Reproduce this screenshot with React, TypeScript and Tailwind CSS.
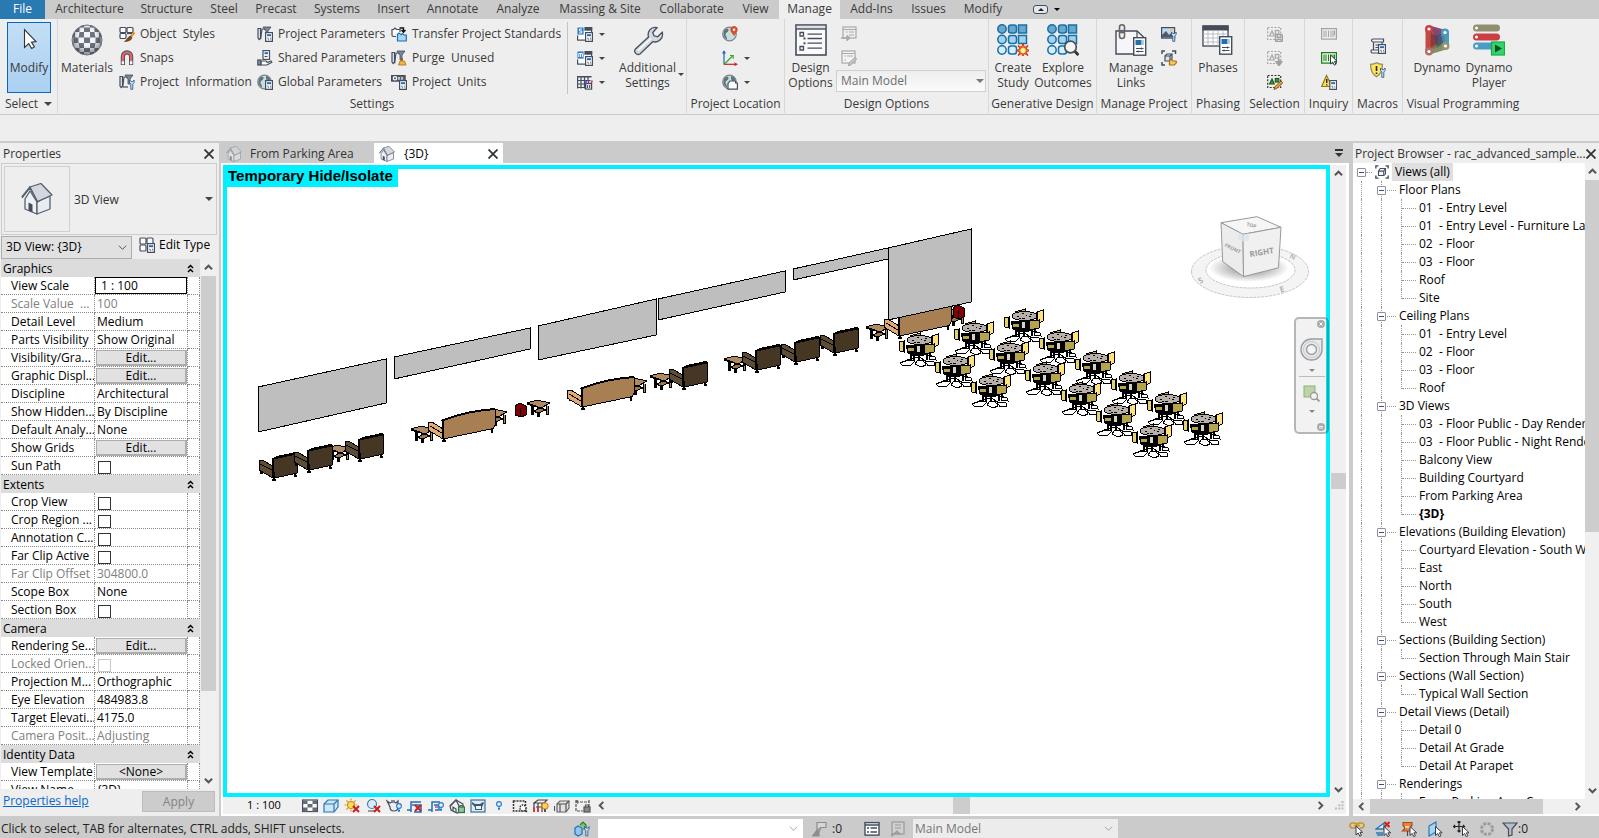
import type { ReactNode } from "react";

/* ---------- icon primitives ---------- */

const D = "#454d5c";

function Ico({ s = 16, v = 16, children }: { s?: number; v?: number; children: ReactNode }) {
  return (
    <svg width={s} height={s} viewBox={`0 0 ${v} ${v}`} fill="none" stroke={D} strokeWidth={1.2} className="shrink-0" aria-hidden="true">
      {children}
    </svg>
  );
}

const Calc = ({ x = 8, y = 6 }: { x?: number; y?: number }) => (
  <g transform={`translate(${x} ${y})`}>
    <rect x="0.6" y="0.6" width="6.8" height="8.8" fill="#fff" />
    <rect x="2" y="2.2" width="4" height="2" fill="#1f6fb5" stroke="none" />
    <path d="M2.2 6.3h1.4M2.9 7.8h1.2M5 6.3h1M5.4 7.8h.8" strokeWidth="0.9" />
  </g>
);

const Wrench = ({ x = 9, y = 5 }: { x?: number; y?: number }) => (
  <g transform={`translate(${x} ${y})`}>
    <path d="M1 1v2.5L2.3 5v5.3h2V5l1.3-1.5V1L4.3 2.6H2.4z" fill="#dbe9f6" strokeWidth="0.9" stroke="#2f5d8c" />
  </g>
);

const RedX = ({ x = 8, y = 8 }: { x?: number; y?: number }) => (
  <path d={`M${x} ${y}l6 6M${x + 6} ${y}l-6 6`} stroke="#c81e1e" strokeWidth="2" />
);

const Bulb = ({ x = 12, y = 8 }: { x?: number; y?: number }) => (
  <g>
    <circle cx={x} cy={y} r="2.4" fill="#dff0ff" stroke="#2878c8" strokeWidth="1.1" />
    <path d={`M${x - 1} ${y + 3.4}h2v2.4h-2z`} fill="#2878c8" stroke="none" />
  </g>
);

const Pointer = ({ x = 8, y = 5 }: { x?: number; y?: number }) => (
  <path d={`M${x} ${y}v9l2.2-2 1.6 3.2 1.6-.9-1.5-3h2.8z`} fill="#fff" strokeWidth="1" stroke="#333b48" />
);

const Blueprint = () => (
  <>
    <path d="M1 2.5h2.5V12l-1.4 1.6L1 12z" fill="#e6edf5" />
    <path d="M3.6 13.4L5 3h2l1.5 1" />
  </>
);

const Funnel = ({ x = 7 }: { x?: number }) => <path d={`M${x} 1h8l-3 4v5h-2V5z`} fill="#7c8694" strokeWidth="0.8" />;

const ObjectStyles = () => (
  <Ico>
    <rect x="1" y="1.5" width="6" height="5" rx="1" fill="#fafafa" />
    <rect x="8" y="1.5" width="6" height="5" rx="1" fill="#fafafa" />
    <rect x="1" y="7.5" width="6" height="5" rx="1" fill="#fafafa" />
    <path d="M8 7.5h5" />
    <path d="M15.5 6.5l-4.5 5" stroke="#e88a1c" strokeWidth="2" />
    <path d="M11.6 10l1.2 1.5c.4 2-2.6 4-7.3 4 2.400-1 3-4.600 6.100-5.500z" fill="#7a4a22" stroke="#5c3416" strokeWidth="0.6" />
  </Ico>
);
const Snaps = () => (
  <Ico>
    <path d="M3.900 15V6.500a4.100 4.100 0 0 1 8.200 0V15" stroke={D} strokeWidth="4.200" />
    <path d="M3.900 14.200V6.500a4.100 4.100 0 0 1 8.200 0v7.700" stroke="#e2666a" strokeWidth="2.400" />
    <path d="M3.900 14.300v-3M12.100 14.300v-3" stroke="#fff" strokeWidth="2.400" />
  </Ico>
);
const ProjectInfo = () => (<Ico><Blueprint /><Funnel x={6} /><path d="M4 13h5" /><Wrench x={9.5} y={5} /></Ico>);
const ProjectParams = () => (<Ico><Blueprint /><Funnel x={6} /><Calc /></Ico>);
const SharedParams = () => (
  <Ico>
    <rect x="6" y="0.600" width="6.500" height="8.800" fill="#fff" />
    <rect x="7.500" y="2.200" width="3.500" height="2" fill="#1f6fb5" stroke="none" />
    <path d="M7.500 6.500h3" />
    <path d="M4 11h5l1.500 1.500 3.500-1.500.8 1.200-4.800 2.800H4z" fill="#fff" />
    <rect x="0.800" y="10" width="3" height="5" fill="#8b95a3" />
  </Ico>
);
const Globe = ({ children }: { children?: ReactNode }) => (
  <Ico>
    <circle cx="7.500" cy="8" r="6.800" fill="#c9dcdc" stroke="#7c8694" />
    <path d="M3 3.500c2-1.500 4-1 3.500 1s-3 2-3 4 2 2.500 1.500 5c-2-1-3.600-3-3.600-5.500S2.200 4.600 3 3.500zM9 2c2 .3 4 2 4.600 4L11 7.500 9 5z" fill="#5f7379" stroke="none" />
    {children}
  </Ico>
);
const Transfer = () => (
  <Ico>
    <path d="M1 9V3.500h1.500L4 2l1.500 1.500H9V6" fill="#fff" />
    <path d="M1 9c0 1 .5 1.500 1.500 1.500H5" />
    <path d="M8.500 2h4v3M10.500 4l2 2.200 2-2.200" stroke="#111" strokeWidth="1.400" />
    <path d="M6.500 8.500L8 7l2 1.800 1.500-1.300L13 9h2.300v6H6.500z" fill="#a9d4f2" stroke="#1f6fb5" />
  </Ico>
);
const Purge = () => (
  <Ico>
    <Blueprint /><Funnel x={6} />
    <path d="M11 8v3" stroke="#8a5a10" strokeWidth="1.500" />
    <path d="M9 11h4.500l1.500 4H7.500z" fill="#f0b93a" stroke="#b07818" strokeWidth="0.900" />
  </Ico>
);
const Units = () => (
  <Ico>
    <rect x="0.600" y="1.600" width="13.500" height="5.500" fill="#59616e" />
    <circle cx="4" cy="4.300" r="1.700" stroke="#fff" /><path d="M8 5.800V3M11 5.800V3" stroke="#fff" />
    <Calc />
  </Ico>
);
const Sched = ({ t }: { t: ReactNode }) => (
  <Ico>
    <rect x="0.600" y="1.600" width="14" height="12.500" fill="#fff" />
    <rect x="0.600" y="1.600" width="14" height="2.500" fill={D} />
    <rect x="0" y="1" width="7" height="8" fill="#2f7cc4" stroke="#fff" strokeWidth="0.800" />
    {t}
    <Calc y={6} />
  </Ico>
);
const SchedS = () => <Sched t={<path d="M5 3H2.500v2h2.200v2H2" stroke="#fff" strokeWidth="1" />} />;
const SchedM = () => <Sched t={<path d="M1.800 7V3.500h3.600V7M3.600 3.500V7" stroke="#fff" strokeWidth="1" />} />;
const PenTable = () => (
  <Ico>
    <path d="M0.600 2.500h13.500M0.600 2.500v12M0.600 6.500h13M0.600 10h7M0.600 13.500h7M4 2.500v12M7.500 2.500v12M11 2.500v4" />
    <path d="M0 2h14.500v1.500H0z" fill={D} stroke="none" />
    <path d="M9 10V7M11.500 10V6" stroke="#5c3fc0" strokeWidth="1.600" /><path d="M14 10l1.200-3.500" stroke="#d33" strokeWidth="1.600" />
    <rect x="8.600" y="9.600" width="6" height="5.500" fill="#fff" /><path d="M10.500 11v3M12.700 11v3" />
  </Ico>
);
const Pin = () => (<Globe><path d="M12 9.500L9 5a3.300 3.300 0 1 1 6 0z" fill="#e0502a" stroke="#b83a1a" strokeWidth="0.600" /><circle cx="12" cy="3.800" r="1.200" fill="#fff" stroke="none" /></Globe>);
const Axes = () => (
  <Ico>
    <path d="M2 1v13.500" stroke="#1d62b0" /><path d="M.5 3.500L2 .8l1.500 2.700" stroke="#1d62b0" fill="#1d62b0" strokeWidth="0.600" />
    <path d="M2 14.300h12" stroke="#d02020" /><path d="M12.500 12.800l3 1.500-3 1.500" stroke="#d02020" fill="#d02020" strokeWidth="0.600" />
    <path d="M2.500 14L10.500 6" stroke="#35a82c" /><path d="M8 5.500h3.200v3.200" stroke="#35a82c" />
  </Ico>
);
const Coord = () => (<Globe><path d="M6 15.200V9.500L8 7h5.500v2h1.900v6.200z" fill="#fff" /></Globe>);

const DoAdd = () => (<Ico><g stroke="#a9a9a9"><rect x="2" y="1" width="13" height="11" /><path d="M2 3.500h13M8 6h5M8 9h5M5 6h1.500" /><path d="M0 12h8M5.500 9.500L8.500 12l-3 2.500" strokeWidth="1.700" /></g></Ico>);
const DoEdit = () => (<Ico><g stroke="#a9a9a9"><rect x="1" y="1" width="13" height="12" fill="#f4f4f4" /><path d="M1 3.500h13M6 6h6M3.500 6H5M3.500 10H5" /><path d="M8 13.500l6-6 1.500 1.500-6 6-2 .5z" fill="#ddd" /></g></Ico>);

const ManageImages = () => (
  <Ico>
    <rect x="0.600" y="1.600" width="13" height="10.500" fill="#bcd9ee" />
    <path d="M1 11.500V9l4-4 3 4 2-2 3 3v1.500z" fill="#4f5967" stroke="none" /><circle cx="10.500" cy="4.500" r="1.300" fill="#ffc04d" stroke="none" />
    <Wrench x={9.500} y={5} />
  </Ico>
);
const Decal = () => (
  <Ico>
    <path d="M1 4V1h3M11 1h3.500v3M1 12v3h3" strokeWidth="1.500" />
    <path d="M4 6l2-2h5v5l-2 2H4z" fill="#dfe5ec" /><path d="M4 6h5v5M9 6l2-2" />
    <path d="M8.500 10h2.500l1 1h3l.5 1.500-2 2.500h-5z" fill="#f6c95a" stroke="#a5701a" />
  </Ico>
);
const SelBase = ({ c }: { c: string }) => (
  <>
    <rect x="0.700" y="1.500" width="13" height="12" stroke={c} strokeDasharray="2 1.400" />
    <path d="M2.500 10l2.500-5 2.200 5z" stroke={c} /><rect x="8.300" y="4.500" width="3.500" height="3.500" stroke={c} />
  </>
);
const SelSave = () => (<Ico><SelBase c="#a6a6a6" /><rect x="8.500" y="8.500" width="7" height="7" rx="0.800" fill="#ddd" stroke="#a0a0a0" /><path d="M10.300 8.800v2.500h3.400V8.800M10 15.300v-2h4v2" stroke="#a0a0a0" /></Ico>);
const SelLoad = () => (<Ico><SelBase c="#a6a6a6" /><path d="M11.800 8.500v4M9.500 12h4.800L12 15.500z" stroke="#a0a0a0" strokeWidth="1.800" fill="#a0a0a0" /></Ico>);
const SelEdit = () => (
  <Ico>
    <rect x="0.700" y="1.500" width="13" height="12" stroke="#333" strokeDasharray="2 1.400" />
    <path d="M2.500 10l2.500-5 2.200 5z" fill="#3c9a3c" stroke="#1c5c1c" /><rect x="8.300" y="4.500" width="3.500" height="3.500" fill="#3c9a3c" stroke="#1c5c1c" />
    <path d="M7 15.500l1-3 6-5.500 1.800 1.800-6 5.600z" fill="#eda13a" stroke="#8a4a12" strokeWidth="0.900" />
  </Ico>
);
const Bars = ({ c, f }: { c: string; f: string }) => (<><rect x="0.600" y="2.600" width="14.800" height="10.500" fill={f} stroke={c} /><path d="M3 4.500v6.500M5 4.500v6.500M7.500 4.500v6.500M10 4.500v6.500M12 4.500v6.500M13.500 4.500v5" stroke={c} strokeWidth="1" /></>);
const Ids = () => <Ico><Bars c="#a2a2a2" f="#eee" /></Ico>;
const SelId = () => (<Ico><Bars c="#1a7a1a" f="#e6f5e0" /><Pointer x={9.500} y={5} /></Ico>);
const Warn = () => (<Ico><path d="M5.500 1.500l5.500 11H0.700z" fill="#ffe14a" stroke="#8d7a20" /><path d="M5.700 5v4M5.700 10.300v1.200" stroke="#222" strokeWidth="1.400" /><Calc x={8.200} y={6} /></Ico>);
const MacroMgr = () => (<Ico><path d="M3 1h10.500v3H3.500C1 4 1 1 3 1zM3.500 4v8M12 4v2M1.500 12H9v3H2.500C1 15 .5 13 1.500 12zM5.500 7H9M5.500 9.500H8" fill="#f4f4f4" /><Calc y={6} /></Ico>);
const MacroSec = () => (<Ico><path d="M6.500.8C8.500 2 10.500 2.300 12.500 2.300c0 6-1.500 10-6 12.500C2 12.300.6 8.300.6 2.300 2.600 2.300 4.500 2 6.500.8z" fill="#ffe45c" stroke="#8d8a60" /><path d="M6.500 4v5M6.500 10.500V12" stroke="#222" strokeWidth="1.600" /><Wrench x={9.500} y={5} /></Ico>);

/* large ribbon icons on a 32 unit grid */
const Big = ({ children }: { children: ReactNode }) => <Ico s={32} v={32}>{children}</Ico>;
const ModifyIcon = () => (<Big><path d="M11.500 5.500v18l4.200-3.800 3 4.800 2.700-1.600-2.900-4.800 4.500-.6z" fill="#fff" stroke="#333" strokeWidth="1.100" /></Big>);
const Materials = () => (
  <Big>
    <defs>
      <radialGradient id="ball" cx="0.500" cy="0.400" r="0.600"><stop offset="0.500" stopColor="#000" stopOpacity="0" /><stop offset="1" stopColor="#20262f" stopOpacity="0.500" /></radialGradient>
      <clipPath id="ballclip"><circle cx="16" cy="16" r="15" /></clipPath>
    </defs>
    <circle cx="16" cy="16" r="15" fill="#f2f4f6" stroke="none" />
    <g clipPath="url(#ballclip)" fill="#6b7480" stroke="none">
      <path d="M8 0h5v3.500H8zM19 0h5v3.500h-5z" />
      <path d="M4 3.500h4.500V8H4zM13 3.500h6V8h-6zM23.500 3.500H28V8h-4.500z" />
      <path d="M0 8h4v5.500H0zM8.500 8H13v5.500H7.500zM19 8h4.500l1 5.500H19zM28 8h4v5.500h-4z" />
      <path d="M2.500 13.500h5V19h-5zM13 13.500h6V19h-6zM24.500 13.500h5V19h-5z" />
      <path d="M0 19h2.500v5H0zM7.500 19H13v5H8.500zM19 19h5.500l-1 5H19zM29.500 19H32v5h-2.500z" />
      <path d="M4 24h4.500v4H5zM13 24h6v4h-6zM23.500 24H28l-1 4h-3.500z" />
      <path d="M8.500 28H13v4H9zM19 28h4.500v4H19z" />
    </g>
    <circle cx="16" cy="16" r="15" fill="url(#ball)" stroke="#6a727e" strokeWidth="1" />
  </Big>
);
const Additional = () => (
  <Big>
    <path d="M3.200 25.200L16.500 13c-1.500-5 2-10 7.500-9.500l1 .3-4.300 4.700 1.300 3.300 3.600 1 4.700-4.500c1.500 6-4 11-9.300 9.300L8 30c-3.200 1.700-6.500-1.800-4.800-4.800z" fill="#d5dae0" strokeWidth="1.300" />
    <path d="M6 26.500L19 14.500" stroke="#fff" strokeWidth="1.600" />
  </Big>
);
const DesignOpts = () => (
  <Big>
    <rect x="1" y="1" width="30" height="30" fill="#fbfbfc" strokeWidth="1.600" />
    <path d="M1.800 1.800h28.400V5H1.800z" fill="#dde1e6" stroke="none" /><path d="M1 5h30" strokeWidth="1.400" />
    <path d="M5 8.500h3.500V12H5zM5 22.500h3.500V26H5z" strokeWidth="1.300" />
    <path d="M12.500 10.200h14.500M12.500 19.200h14.500M12.500 24.200h14.500M12.500 14.500h14.500" strokeWidth="1.300" />
    <path d="M8.500 13.500h2v2h-2zM8.500 18.200h2v2h-2z" fill={D} stroke="none" />
  </Big>
);
const Dots = () => (
  <g stroke="#1a6fa8" strokeWidth="1.500">
    <g fill="#6aa8cc"><circle cx="5" cy="5" r="4.200" /><rect x="11.500" y="1" width="8" height="8" rx="2.500" /><rect x="21.500" y="1" width="8" height="8" /></g>
    <g fill="#a3d4ec"><circle cx="5" cy="15.500" r="4.200" /><rect x="11.500" y="11.500" width="8" height="8" rx="2.500" /><rect x="21.500" y="11.500" width="8" height="8" /></g>
    <g fill="#d3f0fc"><circle cx="5" cy="26" r="4.200" /><rect x="11.500" y="22" width="8" height="8" rx="2.500" /></g>
  </g>
);
const CreateStudy = () => (
  <Big><Dots /><path d="M26 19.500l1.500 4 3.500-2-2 3.500 3.500 1.500-3.500 1.500 2 3.500-3.500-2-1.500 2.500-1.500-2.500-3.500 2 2-3.500-3.500-1.500 3.500-1.500-2-3.500 3.500 2z" fill="#f08a1c" stroke="#d0301a" strokeWidth="1" /><circle cx="26" cy="26.500" r="2.500" fill="#fff2a0" stroke="none" /></Big>
);
const Explore = () => (
  <Big><Dots /><path d="M27.500 27l4 4" stroke="#333" strokeWidth="3" /><circle cx="23.500" cy="23" r="5.800" fill="#f1f5f5" stroke="#4a4f58" strokeWidth="1.700" /></Big>
);
const BigDoc = ({ x, y }: { x: number; y: number }) => (
  <g transform={`translate(${x} ${y})`}>
    <rect x="0.700" y="0.700" width="12" height="17.500" fill="#fff" strokeWidth="1.400" />
    <rect x="2.500" y="3" width="6" height="5" fill="#1f6fb5" stroke="none" /><path d="M10 3v5" stroke="#8aa" />
    <path d="M3 11.500h7.500M3 14.500h7.500M8.500 10.500v2M5 13.500v2" strokeWidth="1" />
  </g>
);
const ManageLinks = () => (
  <Big>
    <path d="M1 7h21l7 6.500V30H1z" fill="#f6f6f8" strokeWidth="1.400" /><path d="M22 7v6.500h7" />
    <rect x="4.500" y="0.800" width="5" height="8" rx="2.500" stroke="#666" strokeWidth="1.600" /><rect x="4.500" y="6.500" width="5" height="8" rx="2.500" stroke="#666" strokeWidth="1.600" />
    <BigDoc x={18} y={13} />
  </Big>
);
const PhasesIcon = () => (
  <Big>
    <rect x="1" y="2" width="25" height="20" fill="#fff" strokeWidth="1.400" /><path d="M1 2h25v4H1z" fill={D} />
    <path d="M1 10h25M1 14h25M1 18h25M6 6v16M11 6v16M16 6v16M21 6v16" stroke="#b0b6be" strokeWidth="0.900" />
    <BigDoc x={17} y={12} />
  </Big>
);
const DynamoIcon = () => (
  <Big>
    <g stroke="none">
      <path d="M5 4l12 8v9L6 28z" fill="#b5433f" /><path d="M6 3l21 5-11 5z" fill="#7a4a78" /><path d="M27 8v14L17 21l-1-8z" fill="#4a86a8" />
      <path d="M6 29l10-9 11 2-6 4z" fill="#5e8a58" /><path d="M10 9l7 4-1 7-8 3z" fill="#8c3a3a" /><path d="M13 12l7-2 2 9-6 4z" fill="#4a4560" opacity="0.700" />
    </g>
    <path d="M7 4v24" stroke="#c24a45" strokeWidth="5" /><path d="M8 3l18 5" stroke="#8a4a70" strokeWidth="3" /><path d="M26 9v13" stroke="#4a9ab8" strokeWidth="4" /><path d="M8 28.500l18-5.500" stroke="#8a8a68" strokeWidth="4" />
    <g strokeWidth="0" fill="#fff"><circle cx="8" cy="5" r="4" fill="#cc3f45" /><circle cx="24" cy="8.500" r="4" fill="#4a9ac0" /><circle cx="8" cy="27.500" r="4" fill="#b0706a" /><circle cx="24.500" cy="22" r="4" fill="#9a946c" /><circle cx="8" cy="5" r="1.600" /><circle cx="24" cy="8.500" r="1.600" /><circle cx="8" cy="27.500" r="1.600" /><circle cx="24.500" cy="22" r="1.600" /></g>
  </Big>
);
const PlayerIcon = () => (
  <Big>
    <g stroke="none">
      <rect x="0" y="0.500" width="27" height="7" rx="3.500" fill="#918d70" /><rect x="0" y="9.500" width="27" height="7" rx="3.500" fill="#ca3f45" /><rect x="0" y="18.500" width="24" height="7" rx="3.500" fill="#4a9cc4" />
      <g fill="#fff"><circle cx="3.500" cy="4" r="1.500" /><circle cx="3.500" cy="13" r="1.500" /><circle cx="3.500" cy="22" r="1.500" /></g>
    </g>
    <rect x="18.500" y="18" width="13" height="13" fill="#2fd66a" stroke="#1ba84c" /><path d="M22 20.500l7 4-7 4z" fill="#0d4a20" stroke="none" />
  </Big>
);

const House = ({ s = 16, faded = false }: { s?: number; faded?: boolean }) => (
  <svg width={s} height={s} viewBox="0 0 32 32" className={faded ? "shrink-0 opacity-50" : "shrink-0"} strokeLinejoin="round" aria-hidden="true">
    <path d="M4 16L9 8l7 11v12L4 26z" fill="#eef1f4" stroke="#566070" strokeWidth="1.300" />
    <path d="M16 19v12l13-5V13z" fill="#e9ecf0" stroke="#566070" strokeWidth="1.300" />
    <path d="M1.500 14.500L9 5l7.500 14 1.500-1L9 3.500 1 13.500z" fill="#9aa3af" stroke="#566070" strokeWidth="1.200" />
    <path d="M9 4l11-3.500L31 12l-14.500 6.500z" fill="#d3d8df" stroke="#566070" strokeWidth="1.300" />
    <path d="M7.500 19.500l4 2v8l-4-2z" fill="#454d5c" />
  </svg>
);

const Arrow = ({ c = "border-t-[#444]" }: { c?: string }) => (
  <span className={`h-0 w-0 shrink-0 border-x-[3px] border-t-[3px] border-x-transparent ${c}`} />
);

const Chev = ({ d, s = 9 }: { d: "up" | "down" | "left" | "right"; s?: number }) => {
  const p = { up: "M1 7l4-4 4 4", down: "M1 3l4 4 4-4", left: "M7 1L3 5l4 4", right: "M3 1l4 4-4 4" }[d];
  return <svg width={s} height={s} viewBox="0 0 10 10" fill="none" stroke="#555" strokeWidth="2.200" className="shrink-0" aria-hidden="true"><path d={p} /></svg>;
};

/* ---------- ribbon ---------- */

const TABS: [string, string][] = [
  ["Architecture", "w-[85px]"], ["Structure", "w-[69px]"], ["Steel", "w-[46px]"], ["Precast", "w-[58px]"], ["Systems", "w-[64px]"],
  ["Insert", "w-[49px]"], ["Annotate", "w-[69px]"], ["Analyze", "w-[62px]"], ["Massing & Site", "w-[102px]"], ["Collaborate", "w-[81px]"],
  ["View", "w-[47px]"], ["Manage", "w-[61px]"], ["Add-Ins", "w-[63px]"], ["Issues", "w-[51px]"], ["Modify", "w-[58px]"],
];

function Tabs() {
  return (
    <nav className="flex h-[19px] shrink-0 items-stretch bg-[#cbcbcb]" aria-label="Ribbon tabs">
      <button className="mr-0.5 w-[45px] bg-[#2a7ab2] pb-0.5 text-white">File</button>
      {TABS.map(([t, w]) => (
        <button key={t} className={`${w} whitespace-nowrap pb-0.5 text-center ${t === "Manage" ? "bg-[#eeeeee]" : ""}`}>{t}</button>
      ))}
      <button className="ml-[21px] flex items-center gap-[6px]" aria-label="Ribbon display">
        <span className="flex h-[9px] w-[15px] items-center justify-center rounded-[3px] border border-[#444c5c] bg-[#e4e8ee]">
          <span className="h-0 w-0 border-x-[3px] border-b-[3px] border-x-transparent border-b-[#222]" />
        </span>
        <Arrow c="border-t-black" />
      </button>
    </nav>
  );
}

function Group({ label, w, last, children }: { label: ReactNode; w: string; last?: boolean; children: ReactNode }) {
  return (
    <section className={`${w} flex shrink-0 flex-col pt-[3px] ${last ? "" : "border-r border-[#d8d8d8]"}`}>
      <div className="flex h-[72px]">{children}</div>
      <h2 className="flex h-5 items-center justify-center gap-[6px] whitespace-nowrap pt-px">{label}</h2>
    </section>
  );
}

function BigBtn({ icon, label, w, arrow, active }: { icon: ReactNode; label: string[]; w: string; arrow?: boolean; active?: boolean }) {
  return (
    <button className={`${w} flex shrink-0 flex-col items-center ${active ? "border border-[#0a66bf] bg-gradient-to-b from-[#c3def6] to-[#abd0f1] pt-px" : "pt-[2px]"}`}>
      {icon}
      <span className="relative mt-1 leading-[15px]">
        {label.map((l) => <span key={l} className="block whitespace-nowrap">{l}</span>)}
        {arrow && <span className="absolute left-full top-[13px] ml-0.5 flex"><Arrow /></span>}
      </span>
    </button>
  );
}

const Cmd = ({ icon, label, arrow, name }: { icon: ReactNode; label?: string; arrow?: boolean; name?: string }) => (
  <button className="flex h-6 items-center whitespace-pre" aria-label={name ?? label}>
    {icon}
    {label && <span className="ml-[5px]">{label}</span>}
    {arrow && <span className="ml-[6px] flex"><Arrow /></span>}
  </button>
);

const Col = ({ w, pad = "", children }: { w: string; pad?: string; children: ReactNode }) => <div className={`${w} ${pad} flex shrink-0 flex-col`}>{children}</div>;

function Ribbon() {
  return (
    <div className="flex h-24 shrink-0 border-b border-[#c9c9c9] bg-[#eeeeee] pb-px">
      <Group w="w-[58px]" label={<>Select <span className="h-0 w-0 border-x-4 border-t-4 border-x-transparent border-t-[#444]" /></>}>
        <div className="flex pl-[7px]"><BigBtn active w="w-[44px]" icon={<ModifyIcon />} label={["Modify"]} /></div>
      </Group>
      <Group w="w-[629px]" label="Settings">
        <BigBtn w="w-[58px]" icon={<Materials />} label={["Materials"]} />
        <Col w="w-[138px]" pad="pl-[3px]">
          <Cmd icon={<ObjectStyles />} label="Object  Styles" />
          <Cmd icon={<Snaps />} label="Snaps" />
          <Cmd icon={<ProjectInfo />} label="Project  Information" />
        </Col>
        <Col w="w-[134px]" pad="pl-[3px]">
          <Cmd icon={<ProjectParams />} label="Project Parameters" />
          <Cmd icon={<SharedParams />} label="Shared Parameters" />
          <Cmd icon={<Globe><Calc /></Globe>} label="Global Parameters" />
        </Col>
        <Col w="w-[179px]" pad="pl-[3px]">
          <Cmd icon={<Transfer />} label="Transfer Project Standards" />
          <Cmd icon={<Purge />} label="Purge  Unused" />
          <Cmd icon={<Units />} label="Project  Units" />
        </Col>
        <Col w="w-[48px]" pad="border-l border-[#c4c4c4] pl-[9px]">
          <Cmd icon={<SchedS />} name="Structural settings" arrow />
          <Cmd icon={<SchedM />} name="MEP settings" arrow />
          <Cmd icon={<PenTable />} name="Panel schedule templates" arrow />
        </Col>
        <BigBtn w="w-[65px]" icon={<Additional />} label={["Additional", "Settings"]} arrow />
      </Group>
      <Group w="w-[98px]" label="Project Location">
        <Col w="w-[98px]" pad="pl-[35px]">
          <Cmd icon={<Pin />} name="Location" />
          <Cmd icon={<Axes />} name="Coordinates" arrow />
          <Cmd icon={<Coord />} name="Position" arrow />
        </Col>
      </Group>
      <Group w="w-[204px]" label="Design Options">
        <BigBtn w="w-[51px]" icon={<DesignOpts />} label={["Design", "Options"]} />
        <div className="flex flex-col">
          <span className="flex flex-col pl-[5px]"><Cmd icon={<DoAdd />} name="Add to set" /><Cmd icon={<DoEdit />} name="Pick to edit" /></span>
          <span className="flex items-center">
            <select aria-label="Active option" disabled className="h-[22px] w-[150px] appearance-none border border-[#d0d0d0] bg-gradient-to-b from-[#eeeeee] to-[#fbfbfb] pl-1 text-[#6d6d6d] opacity-100">
              <option>Main Model</option>
            </select>
            <span className="-ml-[10px] h-0 w-0 border-x-4 border-t-4 border-x-transparent border-t-[#777]" />
          </span>
        </div>
      </Group>
      <Group w="w-[108px]" label="Generative Design">
        <BigBtn w="w-[48px]" icon={<CreateStudy />} label={["Create", "Study"]} />
        <BigBtn w="w-[52px]" icon={<Explore />} label={["Explore", "Outcomes"]} />
      </Group>
      <Group w="w-[95px]" label="Manage Project">
        <span className="w-1 shrink-0" />
        <BigBtn w="w-[60px]" icon={<ManageLinks />} label={["Manage", "Links"]} />
        <Col w="w-4"><Cmd icon={<ManageImages />} name="Manage images" /><Cmd icon={<Decal />} name="Decal types" /></Col>
      </Group>
      <Group w="w-[53px]" label="Phasing"><BigBtn w="w-[52px]" icon={<PhasesIcon />} label={["Phases"]} /></Group>
      <Group w="w-[60px]" label="Selection">
        <Col w="w-[60px]" pad="items-center"><Cmd icon={<SelSave />} name="Save selection" /><Cmd icon={<SelLoad />} name="Load selection" /><Cmd icon={<SelEdit />} name="Edit selection" /></Col>
      </Group>
      <Group w="w-12" label="Inquiry">
        <Col w="w-12" pad="items-center"><Cmd icon={<Ids />} name="IDs of selection" /><Cmd icon={<SelId />} name="Select by ID" /><Cmd icon={<Warn />} name="Warnings" /></Col>
      </Group>
      <Group w="w-[50px]" label="Macros">
        <Col w="w-[50px]" pad="items-center justify-center"><Cmd icon={<MacroMgr />} name="Macro manager" /><Cmd icon={<MacroSec />} name="Macro security" /></Col>
      </Group>
      <Group w="w-[120px]" label="Visual Programming" last>
        <span className="w-2" />
        <BigBtn w="w-[52px]" icon={<DynamoIcon />} label={["Dynamo"]} />
        <BigBtn w="w-[52px]" icon={<PlayerIcon />} label={["Dynamo", "Player"]} />
      </Group>
    </div>
  );
}

/* ---------- properties palette ---------- */

type Prop = { n: string; v?: string; k?: "edit" | "check" | "box"; off?: boolean };
const SECTIONS: { title: string; rows: Prop[] }[] = [
  { title: "Graphics", rows: [
    { n: "View Scale", v: "1 : 100", k: "box" }, { n: "Scale Value  ...", v: "100", off: true }, { n: "Detail Level", v: "Medium" }, { n: "Parts Visibility", v: "Show Original" },
    { n: "Visibility/Gra...", v: "Edit...", k: "edit" }, { n: "Graphic Displ...", v: "Edit...", k: "edit" }, { n: "Discipline", v: "Architectural" }, { n: "Show Hidden...", v: "By Discipline" },
    { n: "Default Analy...", v: "None" }, { n: "Show Grids", v: "Edit...", k: "edit" }, { n: "Sun Path", k: "check" } ] },
  { title: "Extents", rows: [
    { n: "Crop View", k: "check" }, { n: "Crop Region ...", k: "check" }, { n: "Annotation C...", k: "check" }, { n: "Far Clip Active", k: "check" },
    { n: "Far Clip Offset", v: "304800.0", off: true }, { n: "Scope Box", v: "None" }, { n: "Section Box", k: "check" } ] },
  { title: "Camera", rows: [
    { n: "Rendering Se...", v: "Edit...", k: "edit" }, { n: "Locked Orien...", k: "check", off: true }, { n: "Projection M...", v: "Orthographic" },
    { n: "Eye Elevation", v: "484983.8" }, { n: "Target Elevati...", v: "4175.0" }, { n: "Camera Posit...", v: "Adjusting", off: true } ] },
  { title: "Identity Data", rows: [{ n: "View Template", v: "<None>", k: "edit" }, { n: "View Name", v: "{3D}" }] },
];

function Value({ p }: { p: Prop }) {
  if (p.k === "edit") return <button aria-label={`${p.n} ${p.v}`} className="ml-px mt-px block h-4 w-[91px] border-b-2 border-l border-r-2 border-t border-[#adadad] bg-[#e1e1e1] text-center leading-[13px]">{p.v}</button>;
  if (p.k === "check") return <input type="checkbox" aria-label={p.n} disabled={p.off} className={`ml-[3px] mt-[3px] block h-[13px] w-[13px] appearance-none border bg-white ${p.off ? "border-[#c8c8c8]" : "border-[#333]"}`} />;
  if (p.k === "box") return <input aria-label={p.n} defaultValue={p.v} className="block h-[17px] w-[92px] border border-black bg-white pl-[5px]" />;
  return <span className={p.off ? "pl-[2px] text-[#808080]" : "pl-[2px]"}>{p.v}</span>;
}

const CloseBtn = () => (
  <button aria-label="Close" className="flex"><svg width="10" height="10" viewBox="0 0 10 10" stroke="#333" strokeWidth="1.800" aria-hidden="true"><path d="M.5.5l9 9M9.500.5l-9 9" /></svg></button>
);

function VScroll({ cls, thumb }: { cls: string; thumb: string }) {
  return (
    <div className={`${cls} flex shrink-0 flex-col items-center bg-[#f0f0f0]`}>
      <span className="flex h-[17px] shrink-0 items-center"><Chev d="up" /></span>
      <span className={`${thumb} w-full shrink-0 bg-[#cdcdcd]`} />
      <span className="grow" />
      <span className="flex h-[17px] shrink-0 items-center"><Chev d="down" /></span>
    </div>
  );
}

function Properties() {
  return (
    <aside className="flex w-[219px] shrink-0 flex-col bg-[#eeeeee] pl-px text-black">
      <header className="flex h-5 items-center justify-between pl-[2px] pr-[5px] pt-0.5 text-[#333]">Properties<CloseBtn /></header>
      <div className="mr-[2px] flex h-[72px] items-center border border-[#cccccc] p-[2px]">
        <span className="flex h-[66px] w-[66px] items-center justify-center border border-[#d0d0d0]"><House s={32} /></span>
        <span className="ml-1 grow pt-0.5 text-[#333]">3D View</span>
        <span className="mr-px h-0 w-0 border-x-4 border-t-4 border-x-transparent border-t-[#444]" />
      </div>
      <div className="flex h-[25px] items-center pt-px">
        <button className="flex h-[23px] w-[131px] items-center justify-between border border-[#adadad] bg-[#e1e1e1] px-1" aria-label="View type">
          3D View: {"{3D}"}
          <svg width="9" height="9" viewBox="0 0 10 10" fill="none" stroke="#444" aria-hidden="true"><path d="M1 3l4 4 4-4" /></svg>
        </button>
        <button className="mb-1 ml-[7px] flex items-center gap-1">
          <Ico><rect x="1" y="1" width="6" height="6" rx="1" fill="#fafafa" /><rect x="8" y="1" width="6" height="6" rx="1" fill="#fafafa" /><rect x="1" y="8" width="6" height="6" rx="1" fill="#fafafa" /><Calc /></Ico>
          Edit Type
        </button>
      </div>
      <div className="flex min-h-0 grow pr-[3px]">
        <div className="w-[199px] shrink-0 overflow-hidden bg-white">
          <table className="w-full table-fixed border-separate border-spacing-0 text-left leading-[17px]">
            <colgroup><col className="w-[94px]" /><col className="w-[93px]" /><col className="w-[12px]" /></colgroup>
            {SECTIONS.map((s) => (
              <tbody key={s.title}>
                <tr>
                  <th colSpan={3} className="h-[18px] bg-[#dcdcdc] p-0 pl-[2px] font-normal">
                    <span className="flex items-center justify-between pr-[5px]">{s.title}
                      <svg width="9" height="9" viewBox="0 0 9 9" fill="none" stroke="#000" strokeWidth="1.500" aria-hidden="true"><path d="M2 4l2.500-2.500L7 4M2 8l2.500-2.500L7 8" /></svg>
                    </span>
                  </th>
                </tr>
                {s.rows.map((p) => (
                  <tr key={p.n}>
                    <th scope="row" className={`h-[18px] overflow-hidden whitespace-pre border-b border-r border-dotted border-[#8a8a8a] p-0 pl-[10px] font-normal ${p.off ? "text-[#808080]" : ""}`}>{p.n}</th>
                    <td className="h-[18px] border-b border-r border-dotted border-[#8a8a8a] p-0"><Value p={p} /></td>
                    <td className="h-[18px] border-b border-r border-dotted border-[#8a8a8a] p-0" />
                  </tr>
                ))}
              </tbody>
            ))}
          </table>
        </div>
        <VScroll cls="ml-px w-[15px]" thumb="h-[415px]" />
      </div>
      <footer className="flex h-[27px] items-start justify-between pl-[2px] pr-[4px] pt-0.5">
        <a href="#help" className="leading-5 text-[#0a66cc] underline">Properties help</a>
        <button disabled className="h-[21px] w-[73px] border border-[#bcbcbc] bg-[#cccccc] text-[#848484]">Apply</button>
      </footer>
    </aside>
  );
}

/* ---------- project browser ---------- */

const TREE: { g: string; items: string[] }[] = [
  { g: "Floor Plans", items: ["01  - Entry Level", "01  - Entry Level - Furniture Layout", "02  - Floor", "03  - Floor", "Roof", "Site"] },
  { g: "Ceiling Plans", items: ["01  - Entry Level", "02  - Floor", "03  - Floor", "Roof"] },
  { g: "3D Views", items: ["03  - Floor Public - Day Rendering", "03  - Floor Public - Night Rendering", "Balcony View", "Building Courtyard", "From Parking Area", "{3D}"] },
  { g: "Elevations (Building Elevation)", items: ["Courtyard Elevation - South Wing", "East", "North", "South", "West"] },
  { g: "Sections (Building Section)", items: ["Section Through Main Stair"] },
  { g: "Sections (Wall Section)", items: ["Typical Wall Section"] },
  { g: "Detail Views (Detail)", items: ["Detail 0", "Detail At Grade", "Detail At Parapet"] },
  { g: "Renderings", items: ["From Parking Area Comp"] },
];

const Minus = () => (
  <button aria-label="Collapse" className="z-10 -ml-[5px] flex h-[9px] w-[9px] shrink-0 items-center justify-center rounded-[1px] border border-[#919191] bg-white"><span className="h-px w-[5px] bg-[#2b50a0]" /></button>
);
const HDots = ({ w }: { w: string }) => <span className={`${w} h-0 shrink-0 border-t border-dotted border-[#999]`} />;
const VLine = () => <span className="h-full w-5 shrink-0 border-l border-dotted border-[#999]" />;

function Browser() {
  return (
    <aside className="flex w-[246px] shrink-0 flex-col overflow-hidden bg-white text-black">
      <header className="flex h-5 shrink-0 items-center justify-between whitespace-nowrap bg-[#eeeeee] pl-[2px] pr-[3px] pt-0.5 text-[#333]">Project Browser - rac_advanced_sample...<CloseBtn /></header>
      <div className="flex min-h-0 grow">
        <ul className="min-w-0 grow overflow-hidden whitespace-pre pl-2 leading-[18px]">
          <li className="flex h-[18px] items-center pl-px">
            <Minus /><HDots w="w-[6px]" />
            <span className="mx-[3px] flex"><Ico s={14}><path d="M1 4V1h3M12 1h3v3M1 12v3h3M15 12v3h-3" strokeWidth="1.600" /><path d="M4 7l2-3h6v6l-2 2H4z" fill="#f3f5f8" /><path d="M4 7h6v5M10 7l2-3" /></Ico></span>
            <span className="bg-[#dfdfdf] px-[3px]">Views (all)</span>
          </li>
          {TREE.map((t) => (
            <li key={t.g}>
              <div className="flex h-[18px] items-center"><VLine /><span className="h-full w-0 border-l border-dotted border-[#999]" /><Minus /><HDots w="ml-px w-[9px]" /><span className="ml-[3px]">{t.g}</span></div>
              <ul>
                {t.items.map((n, i) => (
                  <li key={n} className="flex h-[18px] items-center">
                    <VLine /><VLine />
                    <span className={`${i === t.items.length - 1 ? "mb-[8px] h-[10px]" : "h-full"} w-0 shrink-0 border-l border-dotted border-[#999]`} />
                    <HDots w="w-[14px]" />
                    <span className={n === "{3D}" ? "ml-[3px] font-bold" : "ml-[3px]"}>{n}</span>
                  </li>
                ))}
              </ul>
            </li>
          ))}
        </ul>
        <VScroll cls="w-[14px]" thumb="h-[352px]" />
      </div>
      <div className="mb-[2px] flex h-[15px] shrink-0 items-center bg-[#f0f0f0]">
        <span className="flex w-[17px] justify-center"><Chev d="left" /></span>
        <span className="h-full w-[173px] bg-[#cdcdcd]" />
        <span className="grow" />
        <span className="mr-[17px] flex"><Chev d="right" /></span>
      </div>
    </aside>
  );
}

/* ---------- 3D model ---------- */

const WALLS = ["258,387 386,359 386,403 258,432", "394,357 530,328 530,349 394,379", "538,326 656,299 656,335 538,360", "658,299 785,271 785,292 658,320", "793,269 888,248 888,259 793,280"];
const CHAIRS: [number, number][] = [[259, 453], [294, 445], [345, 434], [669, 362], [742, 345], [781, 337], [820, 328]];
const SOFAS: [number, number][] = [[428, 409], [567, 377], [884, 306]];
const SIDES: [number, number][] = [[327, 445], [411, 426], [484, 409], [527, 400], [624, 378], [650, 373], [724, 356], [866, 324], [942, 309]];
const DINING: [number, number][] = [[1025, 315], [975, 327], [1060, 336], [920, 339], [1010, 347], [1096, 357], [956, 360], [1046, 368], [1132, 377], [992, 380], [1082, 388], [1168, 398], [1117, 409], [1204, 418], [1153, 430]];

function Armchair({ x, y }: { x: number; y: number }) {
  return (
    <g transform={`translate(${x} ${y})`} stroke="#000" strokeWidth="1">
      <path d="M2 18v3M15 24v4M36 20v4M13 27h4M35 23h3M1 20h3" strokeWidth="2" />
      <path d="M0 8l3-1 11 6v12L0 17z" fill="#5f4c34" /><path d="M1 11l12 6" />
      <path d="M14 6L38 1l.5 19-23 5z" fill="#463624" />
      <path d="M14 25V6L18 4l19-4 2 1" strokeWidth="2" fill="none" />
    </g>
  );
}
function Sofa({ x, y }: { x: number; y: number }) {
  return (
    <g transform={`translate(${x} ${y})`} stroke="#000" strokeWidth="1">
      <path d="M3 20v4M16 29v4M64 20v4M14 32h4" strokeWidth="2" />
      <path d="M0 14l4-1 11 7v10L0 21z" fill="#e0ab74" /><path d="M2 17l12 7" />
      <path d="M14 11.500Q38 2 67 0l.5 15-2 4.500L15 30z" fill="#a87f53" />
      <path d="M14.500 30V11.500Q38 2 67 0" strokeWidth="2" fill="none" />
    </g>
  );
}
function SideTable({ x, y }: { x: number; y: number }) {
  return (
    <g transform={`translate(${x} ${y})`} stroke="#000" strokeWidth="1">
      <path d="M5 6v9M11 8v9M20 6v9" strokeWidth="3" />
      <path d="M6 11l8-3 5 2-8 3z" fill="#9a7550" />
      <path d="M20 6v8" stroke="#b08a62" />
      <path d="M0 3l10-3 13 3-9 5z" fill="#b08a62" />
      <path d="M0 4l14 4" strokeWidth="1" />
    </g>
  );
}
function Dining({ x, y }: { x: number; y: number }) {
  return (
    <g transform={`translate(${x - 21} ${y - 6})`} stroke="#000" strokeWidth="1">
      <path d="M1 30l9-3 6 1-4 4-8 1zM16 31l3-4h5l3 5-5 2zM26 28l9 1 1 3-7 1zM30 22l6 2 1 3-7-1z" fill="#fff" />
      <path d="M12 21v6M15 20v7M20 17v11M28 20v7M31 18v6" strokeWidth="2" />
      <path d="M1 30l10-4 9-2 7 4M28 22l6 2" />
      <path d="M7 12h25v8l-7 2-10 1-6-3z" fill="#000" />
      <path d="M11 3l10-3v6l-9 4z" fill="#c4b35a" />
      <path d="M33 3l6-2v11l-5 3z" fill="#ffe37a" />
      <path d="M33 3v11" strokeWidth="2" />
      <ellipse cx="20.500" cy="7" rx="12.500" ry="4.500" fill="#b8b1ab" />
      <path d="M13 7h2M18 4.500h2M18 9.500h3M25 7h2M22 6.500h1M15 9h2M26 5h2" />
      <path d="M0 9l5-1v11l-4-1z" fill="#e6d36a" />
      <path d="M5 8v11" strokeWidth="2" />
      <path d="M8 14l7 1v4l-7-1z" fill="#b5a34e" /><path d="M18 13h3v6h-3z" fill="#d8d2c0" stroke="none" />
      <path d="M25 12l10-1v8l-9 2z" fill="#b5a34e" />
      <path d="M25 12v9" strokeWidth="2" />
    </g>
  );
}
const RedBox = ({ x, y }: { x: number; y: number }) => (
  <g transform={`translate(${x} ${y})`} stroke="#000"><path d="M0 3l5-3 6 3v9l-5 2-6-2z" fill="#800008" /><path d="M5 5v9" /></g>
);

function ViewCube() {
  return (
    <g strokeLinejoin="round">
      <defs><radialGradient id="shade"><stop offset="0.300" stopColor="#000" stopOpacity="0.350" /><stop offset="1" stopColor="#000" stopOpacity="0" /></radialGradient></defs>
      <path fillRule="evenodd" d="M1191.500 271.500a58.500 26 0 1 0 117 0a58.500 26 0 1 0-117 0zM1206 270a44.500 18 0 1 0 89 0a44.500 18 0 1 0-89 0z" fill="#f4f4f4" stroke="#b8b8b8" strokeDasharray="3 1" strokeWidth="0.800" />
      <ellipse cx="1249" cy="268" rx="40" ry="14" fill="url(#shade)" />
      <path d="M1221 222.700l36-6 24 10.600-38 7z" fill="#f6f6f6" stroke="#999" />
      <path d="M1221 222.700l22 11.600.5 42.300L1222.700 261.600z" fill="#ececec" stroke="#999" />
      <path d="M1243 234.300l38-7-2.500 40.500-35 8.800z" fill="#f0f0f0" stroke="#999" />
      <path d="M1238 232l5 2.500 6-1v7l-6 1-5-2.500z" fill="#dfe5ec" stroke="none" opacity="0.800" />
      <g fill="#9b9b9b" fontFamily="Open Sans, sans-serif" fontWeight="700" textAnchor="middle" stroke="none">
        <text fontSize="8" transform="translate(1262 255) rotate(-9)">RIGHT</text>
        <text fontSize="5" transform="translate(1232 250) rotate(26)">FRONT</text>
        <text fontSize="5" transform="translate(1251 227) rotate(14)">TOP</text>
        <g fill="#b4b4b4">
          <text fontSize="8" transform="translate(1202 283) rotate(-30)">S</text>
          <text fontSize="8" transform="translate(1283 292) rotate(-18)">E</text>
          <text fontSize="7" transform="translate(1292 259) rotate(20)">N</text>
        </g>
      </g>
    </g>
  );
}

function Model() {
  return (
    <svg className="absolute left-0 top-0 h-[624px] w-[1099px]" viewBox="227 169 1099 624" fill="none" role="img" aria-label="3D model view">
      <g shapeRendering="crispEdges">
        {WALLS.map((p) => <polygon key={p} points={p} fill="#bebebe" stroke="#000" />)}
        {SIDES.map(([x, y]) => <SideTable key={x} x={x} y={y} />)}
        <RedBox x={515} y={403} /><RedBox x={953} y={305} />
        {CHAIRS.map(([x, y]) => <Armchair key={x} x={x} y={y} />)}
        {SOFAS.map(([x, y]) => <Sofa key={x} x={x} y={y} />)}
        <polygon points="888,248 971,229 971,302 888,320" fill="#bebebe" stroke="#000" />
        {DINING.map(([x, y]) => <Dining key={x} x={x} y={y} />)}
      </g>
      <ViewCube />
    </svg>
  );
}

function NavBar() {
  return (
    <div className="absolute -right-[3px] top-[148px] flex h-[117px] w-[35px] flex-col items-center rounded-[5px] border-2 border-black/25 bg-black/5">
      <span className="mr-[2px] mt-px flex self-end"><svg width="8" height="8" viewBox="0 0 8 8" aria-hidden="true"><circle cx="4" cy="4" r="4" fill="#aaa" /><path d="M2.500 2.500l3 3M5.500 2.500l-3 3" stroke="#fff" /></svg></span>
      <button aria-label="Steering wheel" className="mt-[10px] flex">
        <svg width="23" height="23" viewBox="0 0 23 23" fill="none" stroke="#9a9da2" aria-hidden="true"><path d="M11.500 1H22v10.500A10.500 10.500 0 1 1 11.500 1z" fill="#e9eaec" strokeWidth="1.400" /><circle cx="11.500" cy="11.500" r="8" stroke="#c4c6ca" /><circle cx="11.500" cy="11.500" r="5" fill="#f4f4f4" strokeWidth="1.400" /></svg>
      </button>
      <span className="mt-2 flex"><Arrow c="border-t-[#888]" /></span>
      <span className="mt-1 h-px w-[26px] bg-[#bbb]" />
      <button aria-label="Zoom" className="mt-2 flex">
        <svg width="17" height="17" viewBox="0 0 17 17" fill="none" aria-hidden="true"><rect x="1" y="1" width="11" height="11" fill="#bcd4a8" stroke="#8bb07c" /><circle cx="11" cy="11" r="3.500" fill="#f4f4f4" stroke="#999" strokeWidth="1.300" /><path d="M13.500 13.500l3 3" stroke="#999" strokeWidth="1.800" /></svg>
      </button>
      <span className="mt-2 flex"><Arrow c="border-t-[#888]" /></span>
      <span className="mb-px mr-[2px] mt-auto flex self-end"><svg width="8" height="8" viewBox="0 0 8 8" aria-hidden="true"><circle cx="4" cy="4" r="4" fill="#aaa" /><path d="M2 3.500h4M2 5h4" stroke="#fff" strokeWidth="0.800" /></svg></span>
    </div>
  );
}

/* ---------- view control bar ---------- */

const VIEW_ICONS: [string, ReactNode][] = [
  ["Detail level", <><rect x="0.600" y="2" width="14.800" height="11.500" fill="#fff" /><path d="M1 2.500h4.500v3.500H1zM10.500 2.500h4.500v3.500h-4.500zM1 9.500h4.500v4H1zM10.500 9.500h4.500v4h-4.500zM5.500 6h5v3.500h-5z" fill="#666c76" stroke="none" /></>],
  ["Visual style", <g stroke="#2a78b8"><path d="M1 6l4-4h10v7l-4 5H1z" fill="#cfe6f7" /><path d="M1 6h10v8M11 6l4-4" /></g>],
  ["Sun path off", <><circle cx="7" cy="7" r="3.500" fill="#ffd75a" stroke="#c89018" /><path d="M7 .5v2M7 11.500v2M.5 7h2M11.500 7h2M2.400 2.400l1.400 1.400M11.600 2.400l-1.400 1.400M2.400 11.600l1.400-1.400" stroke="#d89a20" /><RedX x={9} y={8} /></>],
  ["Shadows off", <><circle cx="7" cy="6" r="4.500" fill="#d8ecfb" stroke="#3a7fb8" /><path d="M3 13h7" stroke="#999" strokeWidth="2" /><RedX x={9} y={8} /></>],
  ["Rendering", <><path d="M1 3l3 2c2-1 5-1 6 0l2-2 0 6c0 3-2 4-4 4s-4-1-4-4z" fill="#eee" /><path d="M5 3h4" /><Bulb x={13} y={8} /></>],
  ["Crop off", <><path d="M0 12h4M4 14V4h10M5 7h9v7H7" stroke="#1f6fb5" strokeWidth="1.500" /><RedX x={8} y={7} /></>],
  ["Crop hidden", <><path d="M0 12h4M4 14V4h8M6 7h5v5H7" stroke="#1f6fb5" strokeWidth="1.500" /><path d="M7 9h3" stroke="#c22" /><Bulb x={13} y={7} /></>],
  ["Lock view", <><path d="M1 8l6-6 7 4-1 7-5 2-6-3z" fill="#f2f2f2" /><path d="M1 8l6-6 3 6v7M4 13V9l3 2v3" /><rect x="9.500" y="9" width="6" height="5.500" fill="#8fc79a" stroke="#3c6c48" /><path d="M11 9V7.500h3V9" stroke="#3c6c48" /></>],
  ["Hide/Isolate", <><rect x="1" y="2" width="14" height="12" fill="#d8ecfb" stroke="#3a6f9c" /><path d="M2 4l3 2h5l3-2 1 1-2 4v3H5V9L2 6z" fill="#4a5563" stroke="none" /><path d="M6 8h5v3H6z" fill="#e8f2fa" stroke="none" /></>],
  ["Reveal hidden", <Bulb x={8} y={6} />],
  ["Temporary view", <><rect x="1.500" y="3" width="12" height="10" strokeDasharray="2 1" stroke="#333" strokeWidth="1.500" /><circle cx="11" cy="10" r="3" fill="#fff" stroke="#333" strokeWidth="1.500" strokeDasharray="1.500 1" /><path d="M13 12l2 2" stroke="#333" /></>],
  ["Analytical model", <><path d="M1 5l4-3h9l-3 3zM1 5v9M5 5v9M9 5v9M3 9h8" stroke="#444" /><path d="M1 9v5M5 9v5" stroke="#c33" strokeWidth="1.500" /><circle cx="12" cy="8" r="3" fill="#ffd35a" stroke="#d88a1c" /><path d="M12 11v3" stroke="#555" strokeWidth="2" /></>],
  ["Highlight sets", <><path d="M3 6l3-3h9v7l-3 4H3z" fill="#e2e2e2" stroke="#666" /><path d="M3 6h9v8M12 6l3-3M6 6v8M0.500 8v5" stroke="#555" /></>],
  ["Reveal constraints", <><path d="M1 2v12M1 4h13M3 2.500L1 4l2 1.500M14 2v12M2 13h6" stroke="#555" strokeDasharray="3 1" /><rect x="9" y="9" width="6" height="5" fill="#888" stroke="#555" /><path d="M10.500 9V7h3v2" stroke="#555" /></>],
];

function Workspace() {
  return (
    <main className="flex min-w-0 grow flex-col bg-[#cbcbcb] px-[2px]">
      <div className="flex h-5 shrink-0 items-stretch text-[#333]">
        <button className="flex w-[153px] items-center gap-2 pl-[5px] pt-px"><House faded />From Parking Area</button>
        <span className="flex w-[129px] items-center bg-white pl-[5px] pr-[5px] pt-px">
          <House /><button className="ml-[9px] grow text-left text-black">{"{3D}"}</button><CloseBtn />
        </span>
        <span className="grow" />
        <button aria-label="Tab list" className="mr-[6px] flex flex-col items-center justify-center gap-[2px]">
          <span className="h-[2px] w-2 bg-[#333]" /><span className="h-0 w-0 border-x-4 border-t-4 border-x-transparent border-t-[#333]" />
        </button>
      </div>
      <div className="flex min-h-0 grow flex-col bg-white pb-[2px] pl-[2px] pr-[3px] pt-[2px]">
        <div className="flex min-h-0 grow">
          <div className="relative min-w-0 grow border-4 border-[#00f0ff] bg-white">
            <Model />
            <span className="absolute -left-1 -top-1 flex h-[22px] items-center whitespace-nowrap bg-[#00f0ff] px-[5px] pb-px font-['Liberation_Sans'] text-[15px] font-bold text-black">Temporary Hide/Isolate</span>
            <NavBar />
          </div>
          <div className="ml-px flex w-[15px] shrink-0 flex-col items-center bg-[#f0f0f0]">
            <span className="flex h-4 items-center"><Chev d="up" /></span>
            <span className="grow" /><span className="h-4 w-full bg-[#cdcdcd]" /><span className="grow" />
            <span className="flex h-4 items-center"><Chev d="down" /></span>
          </div>
        </div>
        <div className="flex h-[17px] shrink-0 items-center bg-[#f0f0f0] pl-6 text-black">
          <span className="w-[55px] text-[11px]">1 : 100</span>
          <span className="flex gap-[5px]">
            {VIEW_ICONS.map(([n, i]) => <button key={n} aria-label={n} className="flex"><Ico>{i}</Ico></button>)}
          </span>
          <span className="ml-[6px] flex"><Chev d="left" /></span>
          <span className="grow" /><span className="h-full w-[17px] bg-[#cdcdcd]" /><span className="grow" />
          <Chev d="right" />
          <svg width="9" height="9" viewBox="0 0 9 9" fill="#bbb" className="ml-[10px] mr-[2px]" aria-hidden="true"><path d="M6.500 0h2v2h-2zM6.500 3.300h2v2h-2zM3.300 3.300h2v2h-2zM6.500 6.600h2v2h-2zM3.300 6.600h2v2h-2zM0 6.600h2v2H0z" /></svg>
        </div>
      </div>
    </main>
  );
}

/* ---------- status bar ---------- */

const SELECT_ICONS: [string, ReactNode][] = [
  ["Select links", <><path d="M1 4.500a2.500 2.500 0 0 1 2.500-2.500h2a2.500 2.500 0 0 1 0 5h-2A2.500 2.500 0 0 1 1 4.500zM8 4.500A2.500 2.500 0 0 1 10.500 2h2a2.500 2.500 0 0 1 0 5h-2M5 4.500h6" stroke="#c8961c" strokeWidth="1.700" /><Pointer x={7} y={5} /></>],
  ["Select underlay", <><path d="M1 8l8-6v6zM1 12h7M2 14h6" fill="#d6ecfa" stroke="#2a78b8" strokeWidth="1.300" /><path d="M9.500 1l5 5M14.500 1l-5 5" stroke="#d02020" strokeWidth="2" /><Pointer x={9} y={5.500} /></>],
  ["Select pinned", <><path d="M2 1.500h9v3L9.500 6v2l2 2H1.500l2-2V6L2 4.500z" fill="#e8823c" stroke="#a84c18" /><path d="M4 6h5" stroke="#fff" /><path d="M6.500 10v5" /><Pointer x={9} y={5.500} /></>],
  ["Select by face", <><path d="M2 5l7-4v10l-7 4z" fill="#a9d4f2" stroke="#2a78b8" /><Pointer x={8.500} y={5.500} /></>],
  ["Drag elements", <><path d="M6 0v11M0.500 5.500h11M4.500 1.500L6 0l1.500 1.500M4.500 9.500L6 11l1.500-1.500M2 4L.5 5.500 2 7M10 4l1.500 1.500L10 7" stroke="#222" /><Pointer x={9.500} y={5.500} /></>],
  ["Background processes", <circle cx="8" cy="8" r="5.500" stroke="#9d9d9d" strokeWidth="3" strokeDasharray="3 1.300" />],
];

function StatusBar() {
  return (
    <footer className="flex h-[22px] shrink-0 items-center bg-[#cbcbcb] pl-px pt-[3px] text-[#222]">
      <span className="w-[573px] whitespace-nowrap">Click to select, TAB for alternates, CTRL adds, SHIFT unselects.</span>
      <Ico><path d="M1 7l3-2 4 2v6l-4 2-3-2z" fill="#8fc6ec" stroke="#1f6fb5" /><path d="M6 4l3-3 3 3v4H9" fill="#7cc47c" stroke="#2c7a2c" /><Wrench x={9.500} y={4.500} /></Ico>
      <select aria-label="Active workset" className="ml-2 h-[19px] w-[205px] appearance-none bg-white"><option></option></select>
      <span className="-ml-[14px] flex w-[14px]"><svg width="9" height="9" viewBox="0 0 10 10" fill="none" stroke="#999" aria-hidden="true"><path d="M1 3l4 4 4-4" /></svg></span>
      <span className="ml-[9px] flex"><Ico><g stroke="#8e8e8e"><path d="M5 1.500h9v5H9L5 9z" fill="#d6d6d6" /><path d="M0.500 15L5 9l2 1.500V15z" fill="#8e8e8e" /><path d="M9 6.500l-2 4" /></g></Ico></span>
      <span className="ml-1 w-8">:0</span>
      <Ico><rect x="1" y="1.600" width="14" height="12.500" fill="#fff" strokeWidth="1.400" /><path d="M1 4h14M6.500 7H13M6.500 11H13M3 7h2M3 11h2" strokeWidth="1.400" /></Ico>
      <span className="ml-[9px] flex"><Ico><g stroke="#9a9a9a"><rect x="3" y="1" width="12" height="12" fill="#d0d0d0" /><path d="M3 15l5-5 3 3H3z" fill="#aaa" /><path d="M6 4h6M6 7h6" /></g></Ico></span>
      <select aria-label="Design option" disabled className="ml-2 h-[19px] w-[205px] appearance-none bg-[#ececec] pl-[2px] text-[#777] opacity-100"><option>Main Model</option></select>
      <span className="-ml-[14px] flex w-[14px]"><svg width="9" height="9" viewBox="0 0 10 10" fill="none" stroke="#999" aria-hidden="true"><path d="M1 3l4 4 4-4" /></svg></span>
      <span className="grow" />
      <span className="flex gap-[10px]">{SELECT_ICONS.map(([n, i]) => <button key={n} aria-label={n} className="flex"><Ico>{i}</Ico></button>)}</span>
      <button className="ml-[7px] mr-[71px] flex items-center" aria-label="Filter :0"><Ico><path d="M1 2h14l-5 6v6l-3.500 1V8z" fill="#b8bec6" /></Ico>:0</button>
    </footer>
  );
}

export default function App() {
  return (
    <div className="flex h-screen flex-col overflow-hidden bg-[#eeeeee] font-['Open_Sans','Noto_Sans_CJK_KR',sans-serif] text-xs text-[#3a3a3a]">
      <Tabs />
      <Ribbon />
      <div className="h-[26px] shrink-0" />
      <div className="flex min-h-0 grow border-t-2 border-[#cbcbcb] bg-[#cbcbcb]">
        <Properties />
        <Workspace />
        <span className="w-[2px] shrink-0" />
        <Browser />
      </div>
      <StatusBar />
    </div>
  );
}
